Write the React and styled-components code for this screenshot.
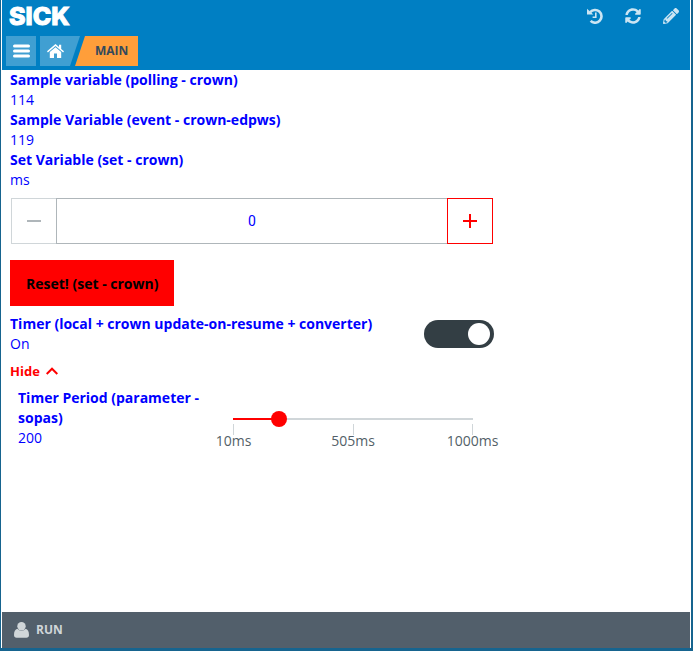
import React, { useState } from "react";
import styled, { createGlobalStyle } from "styled-components";
import { FaSyncAlt, FaPencilAlt } from "react-icons/fa";

const GlobalStyle = createGlobalStyle`
  * { box-sizing: border-box; }
  body {
    margin: 0;
    font-family: "Open Sans", "Noto Sans", sans-serif;
    font-size: 14px;
    line-height: 20px;
    background: #fff;
  }
  button, input { font: inherit; margin: 0; }
`;

const Frame = styled.div`
  min-height: 100vh;
  display: flex;
  flex-direction: column;
  padding: 0 1px;
  background: #fff;
  border: solid #16648f;
  border-width: 0 2px 3px 1px;
`;

const Header = styled.header`
  background: #007fc3;
`;

const TopBar = styled.div`
  display: flex;
  justify-content: space-between;
  align-items: center;
  height: 32px;
  padding: 0 11px 0 7px;
`;

const Logo = styled.div`
  color: #fff;
  font: 800 25px/32px Inter, sans-serif;
  -webkit-text-stroke: 1px #fff;
`;

const Tools = styled.div`
  display: flex;
  gap: 22px;
`;

const ToolButton = styled.button`
  display: flex;
  padding: 0;
  border: 0;
  background: none;
  color: #cce5f3;
  font-size: 16px;
  cursor: pointer;
`;

const Crumbs = styled.nav`
  display: flex;
  padding: 4px;
  height: 38px;
`;

const MenuButton = styled.button`
  display: grid;
  place-items: center;
  width: 30px;
  height: 30px;
  margin-right: 4px;
  padding: 0;
  border: 0;
  background: #409fd2;
  color: #fff;
`;

const HomeLink = styled.a`
  display: flex;
  align-items: center;
  width: 40px;
  height: 30px;
  padding-left: 7px;
  background: #409fd2;
  color: #fff;
  clip-path: polygon(0 0, 100% 0, 75% 100%, 0 100%);
`;

const CurrentLink = styled.a`
  height: 30px;
  margin-left: -5px;
  padding: 0 10px 0 20px;
  background: #ff9e3a;
  color: #34495c;
  font-size: 12px;
  font-weight: 700;
  line-height: 30px;
  text-decoration: none;
  clip-path: polygon(10px 0, 100% 0, 100% 100%, 0 100%);
`;

const Main = styled.main`
  flex: 1;
  width: 100%;
  max-width: 500px;
  padding: 0 8px;
`;

const Label = styled.div`
  color: #00f;
  font-weight: 700;
`;

const Value = styled.div`
  color: #00f;
`;

const Stepper = styled.div`
  display: flex;
  height: 46px;
  margin: 8px 1px 16px;
`;

const StepButton = styled.button`
  display: grid;
  place-items: center;
  width: 46px;
  padding: 0;
  background: #fff;
  color: ${(p) => (p.$active ? "#f00" : "#afb6ba")};
  border: 1px solid ${(p) => (p.$active ? "#f00" : "#d0d6d9")};
`;

const StepInput = styled.input`
  flex: 1;
  min-width: 0;
  margin-left: -1px;
  border: 1px solid #afb6ba;
  border-right: 0;
  color: #00f;
  font-family: Roboto, sans-serif;
  text-align: center;
`;

const ResetButton = styled.button`
  display: block;
  height: 46px;
  padding: 2px 16px 0;
  border: 0;
  background: #f00;
  color: #000;
  font-weight: 700;
`;

const TimerRow = styled.div`
  display: flex;
  justify-content: space-between;
  align-items: center;
  margin-top: 8px;
`;

const Toggle = styled.input`
  appearance: none;
  width: 70px;
  height: 28px;
  padding: 3px 4px;
  display: flex;
  justify-content: ${(p) => (p.checked ? "flex-end" : "flex-start")};
  border-radius: 14px;
  background: ${(p) => (p.checked ? "#333e44" : "#afb6ba")};
  cursor: pointer;
  &::before {
    content: "";
    width: 22px;
    height: 22px;
    border-radius: 50%;
    background: #fff;
  }
`;

const HideButton = styled.button`
  display: flex;
  align-items: center;
  gap: 6px;
  margin: 7px 0;
  padding: 0;
  border: 0;
  background: none;
  color: #f00;
  font-size: 13px;
  font-weight: 700;
`;

const Period = styled.div`
  display: grid;
  grid-template-columns: 200px 1fr;
  gap: 7px;
  padding: 0 13px 0 8px;
`;

const Slider = styled.div`
  padding-top: 23px;
`;

const Range = styled.input`
  appearance: none;
  display: block;
  width: 100%;
  height: 16px;
  background:
    linear-gradient(#f00, #f00) 8px center / calc((100% - 16px) * var(--fill)) 2px no-repeat,
    linear-gradient(#d0d6d9, #d0d6d9) center / calc(100% - 16px) 2px no-repeat;
  &::-webkit-slider-thumb {
    appearance: none;
    width: 16px;
    height: 16px;
    border-radius: 50%;
    background: #f00;
  }
`;

const Scale = styled.div`
  display: flex;
  justify-content: space-between;
  margin: -3px 8px 0;
  color: #535f68;
  line-height: 12px;
`;

const Tick = styled.div`
  width: 1px;
  display: flex;
  flex-direction: column;
  align-items: center;
  &::before {
    content: "";
    width: 1px;
    height: 11px;
    background: #d0d6d9;
  }
`;

const Footer = styled.footer`
  display: flex;
  align-items: center;
  gap: 7px;
  height: 36px;
  padding: 0 12px;
  background: #525f6b;
  color: #d0d6d9;
  font-size: 12px;
  font-weight: 700;
`;

function MenuIcon() {
  return (
    <svg width="17" height="14" stroke="currentColor" strokeWidth="3" strokeLinecap="round" aria-hidden="true">
      <path d="M1.5 2h14M1.5 7h14M1.5 12h14" />
    </svg>
  );
}

function HomeIcon() {
  return (
    <svg width="17" height="14" viewBox="0 0 17 14" fill="currentColor" aria-hidden="true">
      <path d="M8.5 0 12 3V.8h2.2v4.1L17 7.3l-.9 1.1L8.5 2 .9 8.4 0 7.3z" />
      <path d="M8.5 3.2 14.2 8v6H10V9.6H7V14H2.8V8z" />
    </svg>
  );
}

function HistoryIcon() {
  return (
    <svg width="16" height="16" viewBox="0 0 16 16" fill="none" stroke="currentColor" strokeWidth="2.6" aria-hidden="true">
      <path d="M3.2 4.2A6.4 6.4 0 1 1 3.6 12.9" />
      <path d="M0 .8 6.4 6.4H0z" fill="currentColor" stroke="none" />
      <path d="M8.8 4.6v4.6H5.6" strokeWidth="1.6" />
    </svg>
  );
}

function UserIcon() {
  return (
    <svg width="15" height="16" viewBox="0 0 15 16" fill="currentColor" aria-hidden="true">
      <circle cx="7.5" cy="4.2" r="4.2" />
      <path d="M3.4 6.8C1.2 7.2 0 9.6 0 13c0 1.8 1 2.7 2.6 2.7h9.8c1.6 0 2.6-.9 2.6-2.7 0-3.4-1.2-5.8-3.4-6.2A5.2 5.2 0 0 1 7.5 8.8a5.2 5.2 0 0 1-4.1-2z" />
    </svg>
  );
}

export default function App() {
  const [count, setCount] = useState(0);
  const [on, setOn] = useState(true);
  const [open, setOpen] = useState(true);
  const [period, setPeriod] = useState(200);

  return (
    <>
      <GlobalStyle />
      <Frame>
        <Header>
          <TopBar>
            <Logo>SICK</Logo>
            <Tools>
              <ToolButton aria-label="History"><HistoryIcon /></ToolButton>
              <ToolButton aria-label="Refresh"><FaSyncAlt /></ToolButton>
              <ToolButton aria-label="Edit"><FaPencilAlt /></ToolButton>
            </Tools>
          </TopBar>
          <Crumbs>
            <MenuButton aria-label="Menu"><MenuIcon /></MenuButton>
            <HomeLink href="#home" aria-label="Home"><HomeIcon /></HomeLink>
            <CurrentLink href="#main">MAIN</CurrentLink>
          </Crumbs>
        </Header>
        <Main>
          <Label>Sample variable (polling - crown)</Label>
          <Value>114</Value>
          <Label>Sample Variable (event - crown-edpws)</Label>
          <Value>119</Value>
          <Label as="label" htmlFor="set-variable">Set Variable (set - crown)</Label>
          <Value>ms</Value>
          <Stepper>
            <StepButton aria-label="Decrease" disabled={count <= 0} onClick={() => setCount(count - 1)}>
              <svg width="14" height="14" stroke="currentColor" strokeWidth="2"><path d="M0 7h14" /></svg>
            </StepButton>
            <StepInput
              id="set-variable"
              inputMode="numeric"
              value={count}
              onChange={(e) => setCount(Number(e.target.value) || 0)}
            />
            <StepButton $active aria-label="Increase" onClick={() => setCount(count + 1)}>
              <svg width="14" height="14" stroke="currentColor" strokeWidth="2"><path d="M0 7h14M7 0v14" /></svg>
            </StepButton>
          </Stepper>
          <ResetButton onClick={() => setCount(0)}>Reset! (set - crown)</ResetButton>
          <TimerRow>
            <div>
              <Label as="label" htmlFor="timer">Timer (local + crown update-on-resume + converter)</Label>
              <Value>{on ? "On" : "Off"}</Value>
            </div>
            <Toggle id="timer" type="checkbox" role="switch" checked={on} onChange={() => setOn(!on)} />
          </TimerRow>
          <HideButton aria-expanded={open} onClick={() => setOpen(!open)}>
            {open ? "Hide" : "Show"}
            <svg width="12" height="8" fill="none" stroke="currentColor" strokeWidth="2">
              <path d={open ? "M.7 7 6 1.7 11.3 7" : "M.7 1 6 6.3 11.3 1"} />
            </svg>
          </HideButton>
          {open && (
            <Period>
              <div>
                <Label as="label" htmlFor="period">Timer Period (parameter - sopas)</Label>
                <Value>{period}</Value>
              </div>
              <Slider>
                <Range
                  id="period"
                  type="range"
                  min="10"
                  max="1000"
                  value={period}
                  onChange={(e) => setPeriod(Number(e.target.value))}
                  style={{ "--fill": (period - 10) / 990 }}
                />
                <Scale>
                  <Tick>10ms</Tick>
                  <Tick>505ms</Tick>
                  <Tick>1000ms</Tick>
                </Scale>
              </Slider>
            </Period>
          )}
        </Main>
        <Footer><UserIcon />RUN</Footer>
      </Frame>
    </>
  );
}
